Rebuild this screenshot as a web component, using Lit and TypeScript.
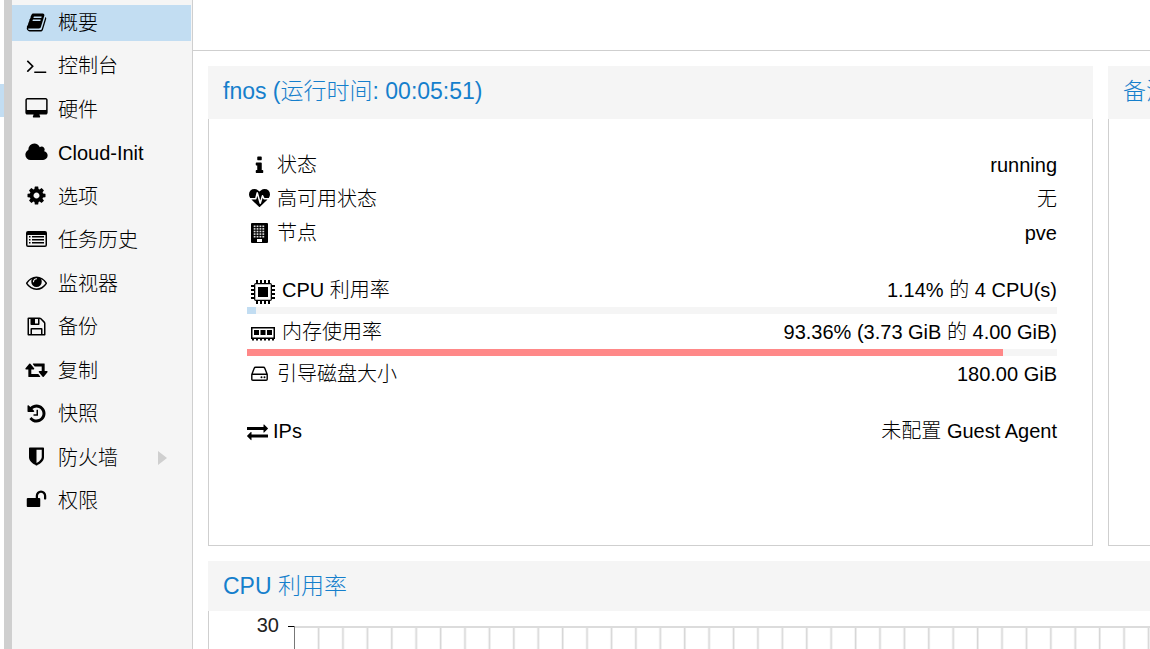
import { LitElement, html, css, svg, nothing } from "lit";
import { customElement, property } from "lit/decorators.js";

interface Glyph {
  box: string;
  w: number;
  h: number;
  body: unknown;
}

const fa = (d: string, width = 1792, x = 0): Glyph => ({
  box: `${x} 0 ${width} 1792`,
  w: Math.round((width * 21) / 1792),
  h: 21,
  body: svg`<path d=${d}></path>`,
});

const windows = [0, 1, 2, 3, 4].flatMap((r) => [0, 1, 2, 3].map((c) => [2.7 + c * 2.9, 2.5 + r * 2.6]));
const pins = [5, 9, 13, 17];

const glyphs: Record<string, Glyph> = {
  book: fa("M1703 478q40 57 18 129l-275 906q-19 64-76.5 107.5t-122.5 43.5h-923q-77 0-148.5-53.5t-99.5-131.5q-24-67-2-127 0-4 3-27t4-37q1-8-3-21.5t-3-19.5q2-11 8-21t16.5-23.5 16.5-23.5q23-38 45-91.5t30-91.5q3-10 .5-30t-.5-28q3-11 17-28t17-23q21-36 42-92t25-90q1-9-2.5-32t.5-28q4-13 22-30.5t22-22.5q19-26 42.5-84.5t27.5-96.5q1-8-3-25.5t-2-26.5q2-8 9-18t18-23 17-21q8-12 16.5-30.5t15-35 16-36 19.5-32 26.5-23.5 36-11.5 47.5 5.5l-1 3q38-9 51-9h761q74 0 114 56t18 130l-274 906q-36 119-71.5 153.5t-128.5 34.5h-869q-27 0-38 15-11 16-1 43 24 70 144 70h923q29 0 56-15.5t35-41.5l300-987q7-22 5-57 38 15 59 43zm-1064 2q-4 13 2 22.5t20 9.5h608q13 0 25.5-9.5t16.5-22.5l21-64q4-13-2-22.5t-20-9.5h-608q-13 0-25.5 9.5t-16.5 22.5zm-83 256q-4 13 2 22.5t20 9.5h608q13 0 25.5-9.5t16.5-22.5l21-64q4-13-2-22.5t-20-9.5h-608q-13 0-25.5 9.5t-16.5 22.5z"),
  terminal: fa("M649 983l-466 466q-10 10-23 10t-23-10l-50-50q-10-10-10-23t10-23l393-393-393-393q-10-10-10-23t10-23l50-50q10-10 23-10t23 10l466 466q10 10 10 23t-10 23zm1079 457v64q0 14-9 23t-23 9h-960q-14 0-23-9t-9-23v-64q0-14 9-23t23-9h960q14 0 23 9t9 23z"),
  desktop: fa("M1728 992v-832q0-13-9.5-22.5t-22.5-9.5h-1600q-13 0-22.5 9.5t-9.5 22.5v832q0 13 9.5 22.5t22.5 9.5h1600q13 0 22.5-9.5t9.5-22.5zm128-832v1088q0 66-47 113t-113 47h-544q0 37 16 77.5t32 71 16 43.5q0 26-19 45t-45 19h-512q-26 0-45-19t-19-45q0-14 16-44t32-70 16-78h-544q-66 0-113-47t-47-113v-1088q0-66 47-113t113-47h1600q66 0 113 47t47 113z", 1984, -96),
  cloud: fa("M1984 1152q0 159-112.5 271.5t-271.5 112.5h-1088q-185 0-316.5-131.5t-131.5-316.5q0-132 71-241.5t187-163.5q-2-28-2-43 0-212 150-362t362-150q158 0 286.5 88t187.5 230q70-62 166-62 106 0 181 75t75 181q0 75-41 138 129 30 213 134.5t84 239.5z", 1984, 32),
  cog: fa("M1152 896q0-106-75-181t-181-75-181 75-75 181 75 181 181 75 181-75 75-181zm512-109v222q0 12-8 23t-20 13l-185 28q-19 54-39 91 35 50 107 138 10 12 10 25t-9 23q-27 37-99 108t-94 71q-12 0-26-9l-138-108q-44 23-91 38-16 136-29 186-7 28-36 28h-222q-14 0-24.5-8.5t-11.5-21.5l-28-184q-49-16-90-37l-141 107q-10 9-25 9-14 0-25-11-126-114-165-168-7-10-7-23 0-12 8-23 15-21 51-66.5t54-70.5q-27-50-41-99l-183-27q-13-2-21-12.5t-8-23.5v-222q0-12 8-23t19-13l186-28q14-46 39-92-40-57-107-138-10-12-10-24 0-10 9-23 26-36 98.5-107.5t94.5-71.5q13 0 26 10l138 107q44-23 91-38 16-136 29-186 7-28 36-28h222q14 0 24.5 8.5t11.5 21.5l28 184q49 16 90 37l142-107q9-9 24-9 13 0 25 10 129 119 165 170 7 8 7 22 0 12-8 23-15 21-51 66.5t-54 70.5q26 50 41 98l183 28q13 2 21 12.5t8 23.5z"),
  list: {
    box: "0 0 21 20",
    w: 21,
    h: 20,
    body: svg`<path fill-rule="evenodd" d="M2 2h17a2 2 0 0 1 2 2v12a2 2 0 0 1-2 2H2a2 2 0 0 1-2-2V4a2 2 0 0 1 2-2zM1.5 6v10q0 .5.5.5h17q.5 0 .5-.5V6z"></path><path d="M3 7h1.500v1.500H3zM3 10h1.500v1.500H3zM3 13h1.500v1.500H3zM6 7h12v1.500H6zM6 10h12v1.500H6zM6 13h12v1.500H6z"></path>`,
  },
  eye: fa("M1664 960q-152-236-381-353 61 104 61 225 0 185-131.5 316.5t-316.5 131.5-316.5-131.5-131.5-316.5q0-121 61-225-229 117-381 353 133 205 333.5 326.5t434.5 121.5 434.5-121.5 333.5-326.5zm-720-384q0-20-14-34t-34-14q-125 0-214.5 89.5t-89.5 214.5q0 20 14 34t34 14 34-14 14-34q0-86 61-147t147-61q20 0 34-14t14-34zm848 384q0 34-20 69-140 230-376.5 368.5t-499.5 138.5-499.5-139-376.5-368q-20-35-20-69t20-69q140-229 376.5-368t499.5-139 499.5 139 376.5 368q20 35 20 69z"),
  save: fa("M512 1536h768v-384h-768v384zm896 0h128v-896q0-14-10-38.5t-20-34.5l-281-281q-10-10-34-20t-39-10v416q0 40-28 68t-68 28h-576q-40 0-68-28t-28-68v-416h-128v1280h128v-416q0-40 28-68t68-28h832q40 0 68 28t28 68v416zm-384-928v-320q0-13-9.5-22.5t-22.5-9.5h-192q-13 0-22.5 9.500t-9.5 22.500v320q0 13 9.5 22.500t22.5 9.500h192q13 0 22.5-9.500t9.5-22.500zm640 32v928q0 40-28 68t-68 28h-1344q-40 0-68-28t-28-68v-1344q0-40 28-68t68-28h928q40 0 88 20t76 48l280 280q28 28 48 76t20 88z"),
  retweet: fa("M1280 1504q0 13-9.5 22.5t-22.5 9.5h-960q-8 0-13.5-2t-9-7-5.5-8-3-11.5-1-11.5v-600h-192q-26 0-45-19t-19-45q0-24 15-41l320-384q19-22 49-22t49 22l320 384q15 17 15 41 0 26-19 45t-45 19h-192v384h576q16 0 25 11l160 192q7 10 7 21zm640-416q0 24-15 41l-320 384q-20 23-49 23t-49-23l-320-384q-15-17-15-41 0-26 19-45t45-19h192v-384h-576q-16 0-25-12l-160-192q-7-9-7-20 0-13 9.5-22.5t22.5-9.5h960q8 0 13.5 2t9 7 5.5 8 3 11.5 1 11.5v600h192q26 0 45 19t19 45z", 1984, -32),
  history: fa("M1664 896q0 156-61 298t-164 245-245 164-298 61q-172 0-327-72.5t-264-204.5q-7-10-6.5-22.5t8.5-20.5l137-138q10-9 25-9 16 2 23 12 73 95 179 147t225 52q104 0 198.5-40.5t163.5-109.5 109.5-163.5 40.5-198.5-40.5-198.5-109.5-163.5-163.5-109.5-198.5-40.5q-98 0-188 35.5t-160 101.5l137 138q31 30 14 69-17 40-59 40h-448q-26 0-45-19t-19-45v-448q0-42 40-59 39-17 69 14l130 129q107-101 244.5-156.5t284.5-55.5q156 0 298 61t245 164 164 245 61 298zm-640-288v448q0 14-9 23t-23 9h-320q-14 0-23-9t-9-23v-64q0-14 9-23t23-9h224v-352q0-14 9-23t23-9h64q14 0 23 9t9 23z"),
  shield: fa("M1344 960v-640h-448v1137q119-63 213-137 235-184 235-360zm192-768v768q0 86-33.5 170.5t-83 150-118 127.5-126.5 103-121 77.5-89.5 49.5-42.5 20q-12 6-26 6t-26-6q-16-7-42.5-20t-89.5-49.5-121-77.5-126.5-103-118-127.5-83-150-33.5-170.5v-768q0-26 19-45t45-19h1152q26 0 45 19t19 45z"),
  unlock: fa("M1728 576v256q0 26-19 45t-45 19h-64q-26 0-45-19t-19-45v-256q0-106-75-181t-181-75-181 75-75 181v192h96q40 0 68 28t28 68v576q0 40-28 68t-68 28h-960q-40 0-68-28t-28-68v-576q0-40 28-68t68-28h672v-192q0-185 131.500-316.500t316.500-131.500 316.500 131.500 131.500 316.500z"),
  info: fa("M1216 1344v128q0 26-19 45t-45 19h-512q-26 0-45-19t-19-45v-128q0-26 19-45t45-19h64v-384h-64q-26 0-45-19t-19-45v-128q0-26 19-45t45-19h384q26 0 45 19t19 45v576h64q26 0 45 19t19 45zm-128-1152v192q0 26-19 45t-45 19h-256q-26 0-45-19t-19-45v-192q0-26 19-45t45-19h256q26 0 45 19t19 45z"),
  heart: fa("M1280 896h305q-5 6-10 10.5t-9 7.5l-3 4-623 600q-18 18-44 18t-44-18l-624-602q-5-2-21-20h369q22 0 39.5-13.5t22.5-34.5l70-281 190 667q6 20 23 33t39 13q21 0 38-13t23-33l146-485 56 112q18 35 57 35zm512-428q0 145-103 300h-369l-111-221q-8-17-25.5-27t-36.5-8q-45 5-56 46l-129 430-196-686q-6-20-23.5-33t-39.5-13-39 13.5-22 34.5l-116 464h-423q-103-155-103-300 0-220 127-344t351-124q62 0 126.5 21.5t120 58 95.5 68.5 76 68q36-36 76-68t95.5-68.5 120-58 126.5-21.5q224 0 351 124t127 344z"),
  building: {
    box: "0 0 17 20",
    w: 17,
    h: 20,
    body: svg`<rect width="17" height="20" rx="1"></rect><g fill="#ddd">${windows.map(
      ([x, y]) => svg`<rect x=${x} y=${y} width="1.800" height="1.600"></rect>`,
    )}<rect x="6" y="16" width="5" height="3" fill="#fff"></rect></g>`,
  },
  cpu: {
    box: "0 0 24 24",
    w: 24,
    h: 24,
    body: svg`<path fill-rule="evenodd" d="M5 3h14a2 2 0 0 1 2 2v14a2 2 0 0 1-2 2H5a2 2 0 0 1-2-2V5a2 2 0 0 1 2-2zM4.300 4.300v15.400h15.400V4.300z"></path><rect x="7" y="7" width="10" height="10"></rect>${pins.map(
      (p) => svg`<path d="M${p} 0h2v3h-2zM${p} 21h2v3h-2zM0 ${p}h3v2H0zM21 ${p}h3v2h-3z"></path>`,
    )}`,
  },
  memory: {
    box: "0 0 24 14",
    w: 24,
    h: 14,
    body: svg`<path fill-rule="evenodd" d="M0 0h24v12H0zM1.500 1.500v9h21v-9z"></path><path d="M3 3h5v5H3zM9.500 3h5v5h-5zM16 3h5v5h-5zM1 11h2v2.500H1zM5 11h2v2.500H5zM9 11h2v2.500H9zM13 11h2v2.500h-2zM17 11h2v2.500h-2zM21 11h2v2.500h-2z"></path>`,
  },
  disk: {
    box: "0 0 17 20",
    w: 17,
    h: 20,
    body: svg`<path fill="none" stroke="#000" stroke-width="1.400" d="M.800 10.500L3.200 4.200Q3.600 3.200 4.600 3.200h7.800q1 0 1.400 1l2.400 6.300v4.700q0 1.100-1.100 1.100H1.900q-1.100 0-1.100-1.100zM.800 10.300h15.400"></path><circle cx="10.500" cy="13.300" r="1"></circle><circle cx="13.500" cy="13.300" r="1"></circle>`,
  },
  exchange: fa("M1792 1184v192q0 13-9.5 22.5t-22.5 9.5h-1376v192q0 13-9.5 22.5t-22.5 9.5q-12 0-24-10l-319-320q-9-9-9-22 0-14 9-23l320-320q9-9 23-9 13 0 22.5 9.5t9.500 22.500v192h1376q13 0 22.500 9.500t9.500 22.500zm0-544q0 14-9 23l-320 320q-9 9-23 9-13 0-22.500-9.500t-9.500-22.500v-192h-1376q-13 0-22.500-9.500t-9.500-22.500v-192q0-13 9.500-22.500t22.500-9.500h1376v-192q0-14 9-23t23-9q12 0 24 10l319 319q9 9 9 23z"),
};

@customElement("pve-icon")
class PveIcon extends LitElement {
  @property() name = "";

  static styles = css`
    :host {
      display: flex;
      align-items: center;
      justify-content: center;
      flex: none;
    }
    .glyph {
      display: block;
      flex: none;
      fill: #000;
    }
  `;

  render() {
    const g = glyphs[this.name];
    return html`<svg class="glyph" viewBox=${g.box} width=${g.w} height=${g.h} aria-hidden="true">${g.body}</svg>`;
  }
}

const menu = [
  { icon: "book", text: "概要", active: true },
  { icon: "terminal", text: "控制台" },
  { icon: "desktop", text: "硬件" },
  { icon: "cloud", text: "Cloud-Init" },
  { icon: "cog", text: "选项" },
  { icon: "list", text: "任务历史" },
  { icon: "eye", text: "监视器" },
  { icon: "save", text: "备份" },
  { icon: "retweet", text: "复制" },
  { icon: "history", text: "快照" },
  { icon: "shield", text: "防火墙", more: true },
  { icon: "unlock", text: "权限" },
];

interface Stat {
  icon: string;
  kind: "fixed" | "image" | "plain";
  label: string;
  value: string;
  usage?: number;
  critical?: boolean;
}

const groups: Stat[][] = [
  [
    { icon: "info", kind: "fixed", label: "状态", value: "running" },
    { icon: "heart", kind: "fixed", label: "高可用状态", value: "无" },
    { icon: "building", kind: "fixed", label: "节点", value: "pve" },
  ],
  [
    { icon: "cpu", kind: "image", label: "CPU 利用率", value: "1.14% 的 4 CPU(s)", usage: 1.14 },
    { icon: "memory", kind: "image", label: "内存使用率", value: "93.36% (3.73 GiB 的 4.00 GiB)", usage: 93.36, critical: true },
    { icon: "disk", kind: "fixed", label: "引导磁盘大小", value: "180.00 GiB" },
  ],
  [{ icon: "exchange", kind: "plain", label: "IPs", value: "未配置 Guest Agent" }],
];

@customElement("app-root")
class AppRoot extends LitElement {
  static styles = css`
    :host {
      display: flex;
      height: 100vh;
      overflow: hidden;
      background: #fff;
      color: #000;
      font: 300 20px/34px "Liberation Sans", "Noto Sans CJK SC", sans-serif;
    }
    .tree {
      flex: none;
      width: 4px;
      padding-top: 84px;
      box-sizing: border-box;
    }
    .tree-selection {
      height: 33px;
      background: #c2ddf2;
    }
    .splitter {
      flex: none;
      width: 8px;
      background: #cfcfcf;
    }
    .sidebar {
      flex: none;
      width: 180px;
      background: #f5f5f5;
      border-right: 1px solid #cfcfcf;
    }
    .menu {
      display: flex;
      flex-direction: column;
      justify-content: space-between;
      min-height: 514px;
      margin: 0;
      padding: 5px 1px 0 0;
      list-style: none;
    }
    .item {
      display: flex;
      align-items: center;
      gap: 10px;
      height: 36px;
      padding: 0 24px 0 12px;
      color: inherit;
      text-decoration: none;
      white-space: nowrap;
    }
    .item.active {
      background: #c2ddf2;
    }
    .item-icon {
      width: 24px;
      padding-bottom: 2px;
    }
    .arrow {
      margin-left: auto;
      fill: #cfcfcf;
    }
    .main {
      flex: 1;
      min-width: 0;
      display: flex;
      flex-direction: column;
    }
    .toolbar {
      flex: none;
      height: 50px;
      border-bottom: 1px solid #cfcfcf;
    }
    .content {
      flex: 1;
      min-height: 0;
      display: grid;
      grid-template-columns: minmax(0, 1fr) 42px;
      grid-template-rows: auto 1fr;
      gap: 15px;
      padding: 15px 0 0 15px;
      overflow: hidden;
    }
    .panel {
      display: flex;
      flex-direction: column;
      min-width: 0;
      overflow: hidden;
    }
    .wide {
      grid-column: 1 / -1;
    }
    .title {
      flex: none;
      margin: 0;
      padding: 0 15px;
      background: #f5f5f5;
      color: #157fcc;
      font-size: 23px;
      font-weight: 300;
      line-height: 50px;
      white-space: nowrap;
    }
    .tall {
      padding-bottom: 3px;
    }
    .body {
      flex: 1;
      border: 1px solid #cfcfcf;
      border-top: 0;
    }
    .cut {
      border-right: 0;
    }
    .status {
      display: flex;
      flex-direction: column;
      gap: 23px;
      min-height: 397px;
      padding: 29px 35px 0 38px;
    }
    .group {
      margin: 0;
    }
    .row {
      display: flex;
      justify-content: space-between;
      height: 34px;
      white-space: nowrap;
    }
    .label {
      display: flex;
      align-items: center;
      gap: 5px;
    }
    .value {
      margin: 0;
    }
    .fixed {
      width: 24px;
      margin-right: 1px;
    }
    .image {
      padding: 4px 2px 0 4px;
    }
    .bar {
      height: 7px;
      margin: 0 0 1px;
      background: #f5f5f5;
    }
    .fill {
      height: 100%;
      background: #c2ddf2;
    }
    .fill.critical {
      background: #ff8888;
    }
    .chart {
      display: flex;
      border-bottom: 0;
      overflow: hidden;
    }
    .axis {
      flex: none;
      width: 70px;
      line-height: 28px;
      text-align: right;
      color: #222;
    }
    .plot {
      flex: 1;
      min-width: 0;
      height: 100%;
      margin-left: 9px;
    }
  `;

  private renderStat(s: Stat) {
    return html`
      <div class="row">
        <dt class="label"><pve-icon class=${s.kind} name=${s.icon}></pve-icon>${s.label}</dt>
        <dd class="value">${s.value}</dd>
      </div>
      ${s.usage === undefined
        ? nothing
        : html`<div class="bar" role="progressbar" aria-label=${s.label} aria-valuenow=${s.usage}>
            <div class="fill ${s.critical ? "critical" : ""}" style="width:${s.usage}%"></div>
          </div>`}
    `;
  }

  render() {
    return html`
      <div class="tree"><div class="tree-selection"></div></div>
      <div class="splitter"></div>
      <nav class="sidebar">
        <ul class="menu">
          ${menu.map(
            (m) => html`<li>
              <a class="item ${m.active ? "active" : ""}" href="#">
                <pve-icon class="item-icon" name=${m.icon}></pve-icon>${m.text}
                ${m.more
                  ? html`<svg class="arrow" width="9" height="14" viewBox="0 0 9 14" aria-hidden="true"><path d="M0 0l9 7-9 7z"></path></svg>`
                  : nothing}
              </a>
            </li>`,
          )}
        </ul>
      </nav>
      <main class="main">
        <div class="toolbar"></div>
        <div class="content">
          <section class="panel">
            <h2 class="title tall">fnos (运行时间: 00:05:51)</h2>
            <div class="body status">
              ${groups.map((g) => html`<dl class="group">${g.map((s) => this.renderStat(s))}</dl>`)}
            </div>
          </section>
          <section class="panel">
            <h2 class="title tall">备注</h2>
            <div class="body cut"></div>
          </section>
          <section class="panel wide">
            <h2 class="title">CPU 利用率</h2>
            <div class="body cut chart">
              <div class="axis">30</div>
              <svg class="plot" aria-hidden="true">
                <defs>
                  <pattern id="grid" x="6.500" y="15" width="24.410" height="400" patternUnits="userSpaceOnUse">
                    <rect x="23.200" width="1.200" height="400" fill="#d6d6d6"></rect>
                    <rect x="0" width=".800" height="400" fill="#e6e6e6"></rect>
                  </pattern>
                </defs>
                <rect x="8" y="15" width="100%" height="400" fill="url(#grid)"></rect>
                <rect x="7" y="15" width="100%" height="2" fill="#dcdcdc"></rect>
                <rect x="0" y="15" width="7" height="1" fill="#000"></rect>
                <rect x="6" y="15" width="1" height="400" fill="#777"></rect>
              </svg>
            </div>
          </section>
        </div>
      </main>
    `;
  }
}
